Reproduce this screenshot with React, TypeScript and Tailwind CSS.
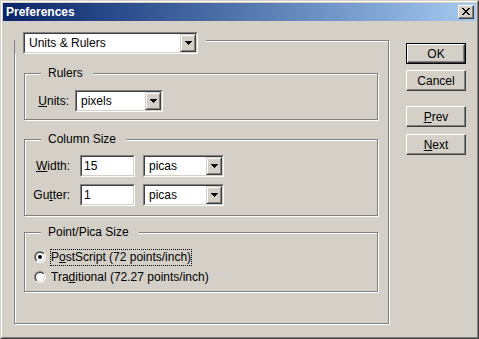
const Arrow = () => (
  <svg width="7" height="4" viewBox="0 0 7 4" shapeRendering="crispEdges">
    <rect x="0" y="0" width="7" height="1" fill="#000" />
    <rect x="1" y="1" width="5" height="1" fill="#000" />
    <rect x="2" y="2" width="3" height="1" fill="#000" />
    <rect x="3" y="3" width="1" height="1" fill="#000" />
  </svg>
);

const CloseGlyph = () => {
  const rows = [
    [0, 1, 6, 7],
    [1, 2, 5, 6],
    [2, 3, 4, 5],
    [3, 4],
    [2, 3, 4, 5],
    [1, 2, 5, 6],
    [0, 1, 6, 7],
  ];
  return (
    <svg width="8" height="7" viewBox="0 0 8 7" shapeRendering="crispEdges">
      {rows.map((cols, y) =>
        cols.map((x) => <rect key={`${x}-${y}`} x={x} y={y} width="1" height="1" fill="#000" />)
      )}
    </svg>
  );
};

const Combo = ({ value, className }: { value: string; className: string }) => (
  <div className={`flex border border-t-[#808080] border-l-[#808080] border-r-white border-b-white ${className}`}>
    <div className="flex flex-1 border border-t-[#404040] border-l-[#404040] border-r-[#d4d0c8] border-b-[#d4d0c8] bg-white">
      <span className="flex-1 pl-[4px] leading-[18px]">{value}</span>
      <div className="flex w-[16px] border border-t-[#d4d0c8] border-l-[#d4d0c8] border-r-[#404040] border-b-[#404040] bg-[#d4d0c8]">
        <div className="flex flex-1 items-center justify-center border border-t-white border-l-white border-r-[#808080] border-b-[#808080]">
          <Arrow />
        </div>
      </div>
    </div>
  </div>
);

const Field = ({ value }: { value: string }) => (
  <div className="flex h-[22px] w-[55px] border border-t-[#808080] border-l-[#808080] border-r-white border-b-white">
    <div className="flex-1 border border-t-[#404040] border-l-[#404040] border-r-[#d4d0c8] border-b-[#d4d0c8] bg-white pl-[2px] leading-[18px]">
      {value}
    </div>
  </div>
);

const Radio = ({ checked }: { checked?: boolean }) => (
  <svg width="12" height="12" viewBox="0 0 12 12">
    <defs>
      <linearGradient id="ro" x1="0" y1="0" x2="1" y2="1">
        <stop offset="0.5" stopColor="#808080" />
        <stop offset="0.5" stopColor="#ffffff" />
      </linearGradient>
      <linearGradient id="ri" x1="0" y1="0" x2="1" y2="1">
        <stop offset="0.5" stopColor="#404040" />
        <stop offset="0.5" stopColor="#d4d0c8" />
      </linearGradient>
    </defs>
    <circle cx="6" cy="6" r="6" fill="url(#ro)" />
    <circle cx="6" cy="6" r="5" fill="url(#ri)" />
    <circle cx="6" cy="6" r="4" fill="#fff" />
    {checked && <circle cx="6" cy="6" r="2" fill="#000" />}
  </svg>
);

const Group = ({ title, className, children }: { title: string; className: string; children: React.ReactNode }) => (
  <div className={`relative ml-[9px] w-[354px] border border-[#808080] shadow-[1px_1px_0_#fff,inset_1px_1px_0_#fff] ${className}`}>
    <span className="absolute left-[16px] top-[-8px] bg-[#d4d0c8] pl-[7px] pr-[10px] leading-[14px]">{title}</span>
    {children}
  </div>
);

const Button = ({ children, isDefault, className = "" }: { children: React.ReactNode; isDefault?: boolean; className?: string }) => (
  <div className={`flex h-[21px] w-[60px] ${isDefault ? "border border-black" : ""} ${className}`}>
    <div className="flex flex-1 items-center justify-center border border-t-white border-l-white border-r-[#404040] border-b-[#404040] shadow-[inset_-1px_-1px_0_#808080]">
      {children}
    </div>
  </div>
);

export default function App() {
  return (
    <div className="h-[339px] w-[479px] border border-t-[#d4d0c8] border-l-[#d4d0c8] border-r-[#404040] border-b-[#404040] bg-[#d4d0c8] font-['Liberation_Sans',Arial,sans-serif] text-[12px] text-black">
      <div className="flex h-full flex-col border border-t-white border-l-white border-r-[#808080] border-b-[#808080] p-px">
        <div className="flex h-[18px] items-center justify-between bg-linear-to-r from-[#0a246a] to-[#a6caf0] pl-[3px] pr-[2px]">
          <span className="text-[12px] font-bold text-white">Preferences</span>
          <div className="flex h-[14px] w-[16px] border border-t-white border-l-white border-r-[#404040] border-b-[#404040] bg-[#d4d0c8] shadow-[inset_-1px_-1px_0_#808080]">
            <div className="flex flex-1 items-center justify-center pb-px">
              <CloseGlyph />
            </div>
          </div>
        </div>

        <div className="flex">
          <div className="relative ml-[11px] mt-[19px] h-[284px] w-[375px] border border-[#808080] pt-[32px] shadow-[1px_1px_0_#fff,inset_1px_1px_0_#fff]">
            <div className="absolute left-0 top-[-9px] bg-[#d4d0c8] pl-[8px] pr-[8px]">
              <Combo value="Units & Rulers" className="h-[22px] w-[175px]" />
            </div>

            <Group title="Rulers" className="h-[47px]">
              <div className="mt-[16px] flex items-center">
                <span className="w-[50px] pr-[6px] text-right">
                  <span className="underline">U</span>nits:
                </span>
                <Combo value="pixels" className="h-[22px] w-[88px]" />
              </div>
            </Group>

            <Group title="Column Size" className="mt-[19px] h-[77px]">
              <div className="mt-[15px] flex items-center">
                <span className="w-[55px] pr-[10px] text-right">
                  <span className="underline">W</span>idth:
                </span>
                <Field value="15" />
                <Combo value="picas" className="ml-[8px] h-[22px] w-[81px]" />
              </div>
              <div className="mt-[7px] flex items-center">
                <span className="w-[55px] pr-[10px] text-right">
                  Gu<span className="underline">t</span>ter:
                </span>
                <Field value="1" />
                <Combo value="picas" className="ml-[8px] h-[22px] w-[81px]" />
              </div>
            </Group>

            <Group title="Point/Pica Size" className="mt-[16px] h-[60px]">
              <div className="mt-[14px] flex h-[20px] items-center pl-[9px]">
                <Radio checked />
                <span className="ml-[4px] h-[17px] border border-dotted border-black leading-[15px]">
                  P<span className="underline">o</span>stScript (72 points/inch)
                </span>
              </div>
              <div className="flex h-[20px] items-center pl-[9px]">
                <Radio />
                <span className="ml-[4px] h-[17px] border border-transparent leading-[15px]">
                  Tra<span className="underline">d</span>itional (72.27 points/inch)
                </span>
              </div>
            </Group>
          </div>

          <div className="ml-[17px] mt-[22px] flex flex-col">
            <Button isDefault>OK</Button>
            <Button className="mt-[6px]">Cancel</Button>
            <Button className="mt-[15px]">
              <span>
                <span className="underline">P</span>rev
              </span>
            </Button>
            <Button className="mt-[7px]">
              <span>
                <span className="underline">N</span>ext
              </span>
            </Button>
          </div>
        </div>
      </div>
    </div>
  );
}
